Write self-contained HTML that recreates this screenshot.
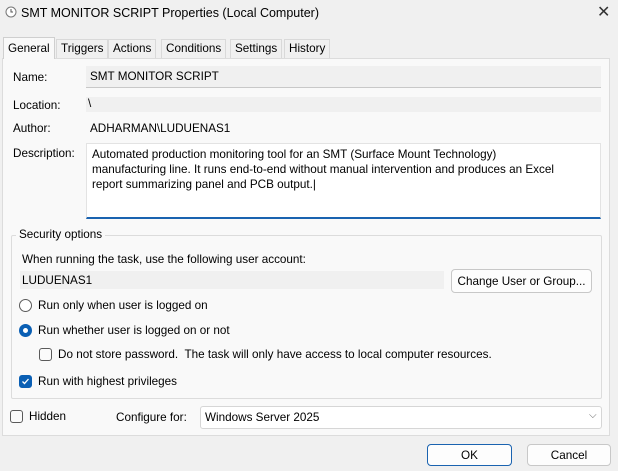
<!DOCTYPE html>
<html><head><style>
*{box-sizing:border-box;margin:0;padding:0}
body{width:618px;height:471px;background:#f0f0f0;font-family:"Liberation Sans",sans-serif;font-size:11.7px;color:#000;position:relative;overflow:hidden}
.a{position:absolute;white-space:nowrap}
.tab{position:absolute;top:39px;height:19px;border:1px solid #d9d9d9;border-bottom:none;background:#f0f0f0;padding:2px 4px 0}
.rb{position:absolute;width:13px;height:13px;border:1px solid #5a5a5a;border-radius:50%;background:#fff}
.cb{position:absolute;width:13px;height:13px;border:1px solid #5a5a5a;border-radius:3px;background:#fbfbfb}
.btn{position:absolute;border:1px solid #c8c8c8;border-radius:4px;background:#fdfdfd;text-align:center}
</style></head><body>
<svg class="a" style="left:5px;top:6px" width="12" height="12" viewBox="0 0 12 12"><circle cx="6" cy="6" r="5" fill="#fff" stroke="#777"/><path d="M6 3v3h2" stroke="#555" fill="none"/></svg>
<div class="a" style="left:21px;top:6px;font-size:12.5px">SMT MONITOR SCRIPT Properties (Local Computer)</div>
<div class="a" style="left:597px;top:2px;font-size:16px;color:#333">✕</div>

<div class="a" style="left:2px;top:58px;width:608px;height:378px;background:#f9f9f9;border:1px solid #dcdcdc"></div>
<div class="tab" style="left:56px">Triggers</div>
<div class="tab" style="left:108px">Actions</div>
<div class="tab" style="left:161px">Conditions</div>
<div class="tab" style="left:230px">Settings</div>
<div class="tab" style="left:284px">History</div>
<div class="tab" style="left:3px;top:37px;height:22px;background:#f9f9f9;padding-top:4px;border-color:#cfcfcf">General</div>

<div class="a" style="left:13px;top:71px">Name:</div>
<div class="a" style="left:86px;top:66px;width:515px;height:22px;background:#f0f0f0;border-bottom:1px solid #c8c8c8;padding:4px 0 0 4px">SMT MONITOR SCRIPT</div>
<div class="a" style="left:13px;top:99px">Location:</div>
<div class="a" style="left:86px;top:97px;width:515px;height:15px;background:#f0f0f0;padding-left:2px">\</div>
<div class="a" style="left:13px;top:122px">Author:</div>
<div class="a" style="left:90px;top:122px">ADHARMAN\LUDUENAS1</div>
<div class="a" style="left:13px;top:147px">Description:</div>
<div class="a" style="left:86px;top:143px;width:515px;height:76px;background:#fff;border:1px solid #e3e3e3;border-bottom:2px solid #1a63b0;padding:3px 5px;line-height:15px">Automated production monitoring tool for an SMT (Surface Mount Technology)<br>manufacturing line. It runs end-to-end without manual intervention and produces an Excel<br>report summarizing panel and PCB output.|</div>

<div class="a" style="left:11px;top:235px;width:591px;height:164px;border:1px solid #dcdcdc;border-radius:2px"></div>
<div class="a" style="left:16px;top:228px;background:#f9f9f9;padding:0 3px">Security options</div>
<div class="a" style="left:22px;top:253px">When running the task, use the following user account:</div>
<div class="a" style="left:20px;top:271px;width:424px;height:18px;background:#f0f0f0;padding:3px 0 0 2px">LUDUENAS1</div>
<div class="btn" style="left:451px;top:269px;width:141px;height:24px;padding-top:5px">Change User or Group...</div>
<div class="rb" style="left:19px;top:299px"></div>
<div class="a" style="left:38px;top:299px">Run only when user is logged on</div>
<div class="rb" style="left:19px;top:324px;border:4px solid #0a5fb4"></div>
<div class="a" style="left:38px;top:324px">Run whether user is logged on or not</div>
<div class="cb" style="left:39px;top:348px"></div>
<div class="a" style="left:58px;top:348px">Do not store password.&nbsp; The task will only have access to local computer resources.</div>
<div class="cb" style="left:19px;top:375px;background:#0a5fb4;border-color:#0a5fb4"><svg width="11" height="11" style="position:absolute;left:0;top:0"><path d="M2.5 5.5l2 2 4-4.5" stroke="#fff" stroke-width="1.3" fill="none"/></svg></div>
<div class="a" style="left:38px;top:375px">Run with highest privileges</div>

<div class="cb" style="left:10px;top:410px"></div>
<div class="a" style="left:29px;top:410px">Hidden</div>
<div class="a" style="left:116px;top:411px">Configure for:</div>
<div class="a" style="left:200px;top:406px;width:402px;height:23px;background:#fff;border:1px solid #d6d6d6;border-radius:3px;padding:4px 0 0 4px">Windows Server 2025</div>
<div class="a" style="left:589px;top:410px;color:#666;font-size:10px">⌵</div>

<div class="btn" style="left:427px;top:444px;width:85px;height:22px;padding-top:4px;border-color:#1a63b0">OK</div>
<div class="btn" style="left:527px;top:444px;width:84px;height:22px;padding-top:4px">Cancel</div>
</body></html>
